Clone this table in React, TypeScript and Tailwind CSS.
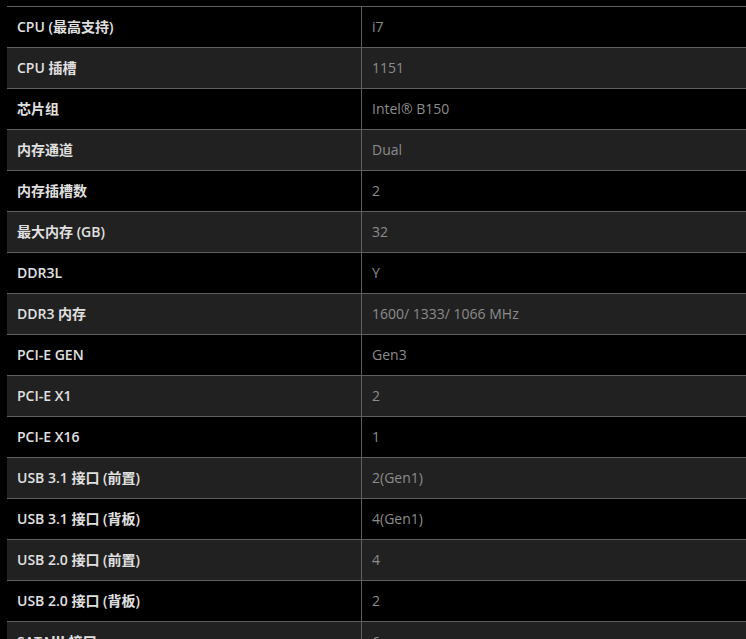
import React from "react";

const rows: [string, string][] = [
  ["CPU (最高支持)", "i7"],
  ["CPU 插槽", "1151"],
  ["芯片组", "Intel® B150"],
  ["内存通道", "Dual"],
  ["内存插槽数", "2"],
  ["最大内存 (GB)", "32"],
  ["DDR3L", "Y"],
  ["DDR3 内存", "1600/ 1333/ 1066 MHz"],
  ["PCI-E GEN", "Gen3"],
  ["PCI-E X1", "2"],
  ["PCI-E X16", "1"],
  ["USB 3.1 接口 (前置)", "2(Gen1)"],
  ["USB 3.1 接口 (背板)", "4(Gen1)"],
  ["USB 2.0 接口 (前置)", "4"],
  ["USB 2.0 接口 (背板)", "2"],
  ["SATAⅢ 接口", "6"],
  ["M.2", "1"],
];

export default function App() {
  return (
    <div
      className="min-h-screen bg-black pt-[6px] pl-[7px]"
      style={{ fontFamily: '"Open Sans", "Noto Sans CJK SC", sans-serif' }}
    >
      <div className="flex flex-col">
        {rows.map(([k, v], i) => (
          <div
            key={i}
            className={`grid h-[41px] grid-cols-[355px_1fr] border-t border-[#5f5f5f] ${
              i % 2 === 1 ? "bg-[#212121]" : "bg-black"
            }`}
          >
            <div className="flex items-center border-r border-[#5f5f5f] pb-[2px] pl-[10px] text-[14px] font-semibold text-[#e0e0e0]">
              {k}
            </div>
            <div className="flex items-center pb-[2px] pl-[10px] text-[14px] text-[#8c8c8c]">
              {v}
            </div>
          </div>
        ))}
      </div>
    </div>
  );
}
